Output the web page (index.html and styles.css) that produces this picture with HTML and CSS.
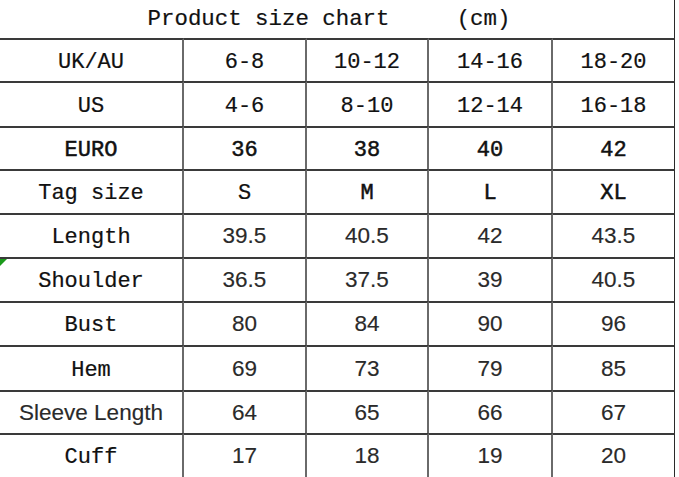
FILE: index.html
```html
<!DOCTYPE html>
<html>
<head>
<meta charset="utf-8">
<link rel="stylesheet" href="styles.css">
</head>
<body>
<div class="chart">
  <div class="cell title"><span class="mono">Product size chart     (cm)</span></div>

  <div class="cell mono">UK/AU</div>
  <div class="cell mono">6-8</div>
  <div class="cell mono">10-12</div>
  <div class="cell mono">14-16</div>
  <div class="cell mono last">18-20</div>

  <div class="cell mono">US</div>
  <div class="cell mono">4-6</div>
  <div class="cell mono">8-10</div>
  <div class="cell mono">12-14</div>
  <div class="cell mono last">16-18</div>

  <div class="cell mono heavy">EURO</div>
  <div class="cell mono heavy">36</div>
  <div class="cell mono heavy">38</div>
  <div class="cell mono heavy">40</div>
  <div class="cell mono heavy last">42</div>

  <div class="cell mono">Tag size</div>
  <div class="cell mono">S</div>
  <div class="cell mono heavy">M</div>
  <div class="cell mono heavy">L</div>
  <div class="cell mono heavy last">XL</div>

  <div class="cell mono">Length</div>
  <div class="cell num">39.5</div>
  <div class="cell num">40.5</div>
  <div class="cell num">42</div>
  <div class="cell num last">43.5</div>

  <div class="cell mono marked">Shoulder<span class="flag"></span></div>
  <div class="cell num">36.5</div>
  <div class="cell num">37.5</div>
  <div class="cell num">39</div>
  <div class="cell num last">40.5</div>

  <div class="cell mono">Bust</div>
  <div class="cell num">80</div>
  <div class="cell num">84</div>
  <div class="cell num">90</div>
  <div class="cell num last">96</div>

  <div class="cell mono">Hem</div>
  <div class="cell num">69</div>
  <div class="cell num">73</div>
  <div class="cell num">79</div>
  <div class="cell num last">85</div>

  <div class="cell num">Sleeve Length</div>
  <div class="cell num">64</div>
  <div class="cell num">65</div>
  <div class="cell num">66</div>
  <div class="cell num last">67</div>

  <div class="cell mono">Cuff</div>
  <div class="cell num">17</div>
  <div class="cell num">18</div>
  <div class="cell num">19</div>
  <div class="cell num last">20</div>
</div>
</body>
</html>
```

FILE: styles.css
```css
html, body {
  margin: 0;
  padding: 0;
  background: #ffffff;
}

.chart {
  width: 675px;
  height: 477px;
  display: grid;
  grid-template-columns: 184px 123px 122px 124px 122px;
  grid-template-rows: 38px 43px 45px 43px 44px 44px 44px 44px 45px 43px 44px;
  overflow: hidden;
}

.cell {
  box-sizing: border-box;
  display: flex;
  align-items: center;
  justify-content: center;
  border-top: 2px solid #3a3a3a;
  border-right: 2px solid #6a6a6a;
  color: #111111;
  white-space: pre;
  padding-top: 3px;
}

.cell.last {
  border-right: 1px solid #2a2a2a;
}

.title {
  grid-column: 1 / span 5;
  border-top: none;
  border-right: 1px solid #2a2a2a;
  padding-top: 0;
  padding-right: 16px;
}

.mono {
  font-family: "Liberation Mono", "DejaVu Sans Mono", monospace;
  font-size: 22px;
  -webkit-text-stroke: 0.2px #111111;
}

.title .mono {
  font-size: 22.4px;
}

.heavy {
  -webkit-text-stroke: 0.5px #111111;
}

.num {
  font-family: "Liberation Sans", Arial, sans-serif;
  font-size: 22.5px;
  color: #2a2a2a;
  padding-top: 0;
  -webkit-text-stroke: 0.15px #2a2a2a;
}

.marked {
  position: relative;
}

.flag {
  position: absolute;
  left: 0;
  top: 0;
  width: 0;
  height: 0;
  border-top: 7px solid #1a9a1a;
  border-right: 7px solid transparent;
}
```
